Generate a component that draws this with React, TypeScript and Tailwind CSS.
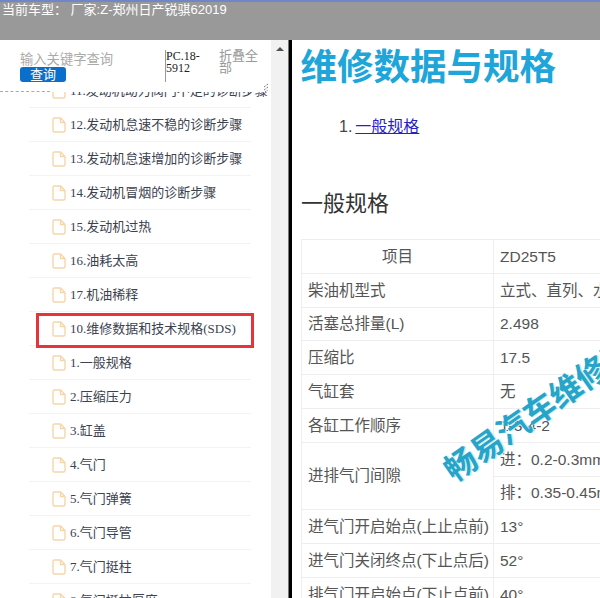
const TREE_ITEMS = [
  "11.发动机动力阀门不足的诊断步骤",
  "12.发动机怠速不稳的诊断步骤",
  "13.发动机怠速增加的诊断步骤",
  "14.发动机冒烟的诊断步骤",
  "15.发动机过热",
  "16.油耗太高",
  "17.机油稀释",
  "10.维修数据和技术规格(SDS)",
  "1.一般规格",
  "2.压缩压力",
  "3.缸盖",
  "4.气门",
  "5.气门弹簧",
  "6.气门导管",
  "7.气门挺柱",
  "8.气门挺柱厚度",
];

const SPEC_ROWS = [
  ["柴油机型式", "立式、直列、水冷"],
  ["活塞总排量(L)", "2.498"],
  ["压缩比", "17.5"],
  ["气缸套", "无"],
  ["各缸工作顺序", "1-3-4-2"],
];

const TIMING_ROWS = [
  ["进气门开启始点(上止点前)", "13°"],
  ["进气门关闭终点(下止点后)", "52°"],
  ["排气门开启始点(下止点前)", "40°"],
];

const SERIF_CJK = { fontFamily: '"Liberation Serif", "Noto Sans CJK SC", serif' };

function FileIcon() {
  return (
    <svg width="14" height="16" viewBox="0 0 14 16" fill="none" className="shrink-0">
      <path
        d="M1 2.5 Q1 1 2.5 1 H8.5 L13 5.5 V13.5 Q13 15 11.5 15 H2.5 Q1 15 1 13.5 Z M8.5 1 V5.5 H13"
        stroke="#f6d6ab"
        strokeWidth="1.4"
      />
    </svg>
  );
}

function TreeRow({ label }: { label: string }) {
  const marked = label.startsWith("10.");
  return (
    <div className="relative ml-[29px] flex h-[34px] w-[222px] items-center gap-[4px] border-b border-[#f3f3f3] pl-[23px]">
      <FileIcon />
      <span className="whitespace-nowrap text-[13px] text-[#3c4250]" style={SERIF_CJK}>
        {label}
      </span>
      {marked && (
        <div className="absolute left-[7px] top-[1px] h-[35px] w-[218px] border-[3px] border-[#e5343a]" />
      )}
    </div>
  );
}

function Sidebar() {
  return (
    <div className="flex w-[271px] flex-col overflow-hidden">
      <div className="relative flex h-[52px] shrink-0 bg-white pt-[10px]">
        <div className="ml-[20px] w-[145px] pt-[1px]">
          <div className="text-[13.3px] leading-[17px] text-[#aaaaaa]">输入关键字查询</div>
          <div className="mt-[-1px] flex h-[15px] w-[46px] items-center justify-center rounded-[3px] bg-[#0a6fcb] text-[13px] text-white">
            查询
          </div>
        </div>
        <div
          className="h-[32px] w-[54px] border-l border-[#999999] text-[12px] leading-[12px] text-[#222222]"
          style={SERIF_CJK}
        >
          PC.18-
          <br />
          5912
        </div>
        <div className="w-[40px] text-[13px] leading-[12px] text-[#999999]">折叠全部</div>
        <div className="absolute bottom-0 left-0 w-[50px] border-b border-dashed border-[#aaaaaa]" />
        <svg width="6" height="10" viewBox="0 0 6 10" className="absolute bottom-[-1px] right-[2px]">
          <path d="M1 4 L5 1 M1 7 L5 4 M2 9 L5 7" stroke="#555555" strokeDasharray="1 1" />
        </svg>
      </div>
      <div className="flex-1 overflow-hidden">
        <div className="mt-[-18px]">
          {TREE_ITEMS.map((label) => (
            <TreeRow key={label} label={label} />
          ))}
        </div>
      </div>
    </div>
  );
}

function SpecTable() {
  const cell = "h-[33.8px] border border-[#eeeeee] px-[6px] py-0 align-middle";
  return (
    <table className="ml-[9px] mt-[19px] w-[400px] table-fixed border-collapse text-[15.5px] text-[#555555]">
      <colgroup>
        <col className="w-[192px]" />
        <col />
      </colgroup>
      <tbody>
        <tr>
          <td className={`${cell} text-center`}>项目</td>
          <td className={cell}>ZD25T5</td>
        </tr>
        {SPEC_ROWS.map(([name, value]) => (
          <tr key={name}>
            <td className={cell}>{name}</td>
            <td className={`${cell} whitespace-nowrap`}>{value}</td>
          </tr>
        ))}
        <tr>
          <td className={cell} rowSpan={2}>
            进排气门间隙
          </td>
          <td className={cell}>进：0.2-0.3mm</td>
        </tr>
        <tr>
          <td className={`${cell} whitespace-nowrap`}>排：0.35-0.45mm</td>
        </tr>
        {TIMING_ROWS.map(([name, value]) => (
          <tr key={name}>
            <td className={`${cell} whitespace-nowrap`}>{name}</td>
            <td className={cell}>{value}</td>
          </tr>
        ))}
      </tbody>
    </table>
  );
}

function Article() {
  return (
    <div className="relative min-w-0 flex-1 overflow-hidden bg-white">
      <h1 className="ml-[8.5px] mt-[5px] text-[36.5px] font-bold leading-[46px] text-[#1ea5da]">维修数据与规格</h1>
      <div className="ml-[47px] mt-[24px] flex gap-[3px] text-[16px] leading-[24px] text-[#444444]">
        <span>1.</span>
        <a href="#" className="text-[#2a1fc4] underline">
          一般规格
        </a>
      </div>
      <h2 className="ml-[9px] mt-[49px] text-[22px] font-normal leading-[32px] text-[#333333]">一般规格</h2>
      <SpecTable />
      <div className="absolute left-[156px] top-[418px] origin-left -rotate-[35deg] whitespace-nowrap text-[32px] font-bold leading-[32px] text-[#27a5c9] [text-shadow:1px_1px_0_#c9eef5]">
        畅易汽车维修网
      </div>
    </div>
  );
}

export default function App() {
  return (
    <div
      className="flex h-[598px] w-[600px] flex-col overflow-hidden bg-white"
      style={{ fontFamily: '"Liberation Sans", "Noto Sans CJK SC", sans-serif' }}
    >
      <div className="h-[40px] shrink-0 border-t-2 border-[#6f86c9] bg-[#999999] pl-[2px] text-[13px] leading-[15px] text-white">
        当前车型：&nbsp;厂家:Z-郑州日产锐骐62019
      </div>
      <div className="flex min-h-0 flex-1">
        <Sidebar />
        <div className="flex w-[18px] shrink-0 justify-center border-r border-[#777777] bg-[#f1f1f1] pt-[7px]">
          <div className="h-0 w-0 border-x-[4px] border-b-[4px] border-x-transparent border-b-[#505050]" />
        </div>
        <div className="w-[3px] shrink-0 bg-black" />
        <Article />
      </div>
    </div>
  );
}
